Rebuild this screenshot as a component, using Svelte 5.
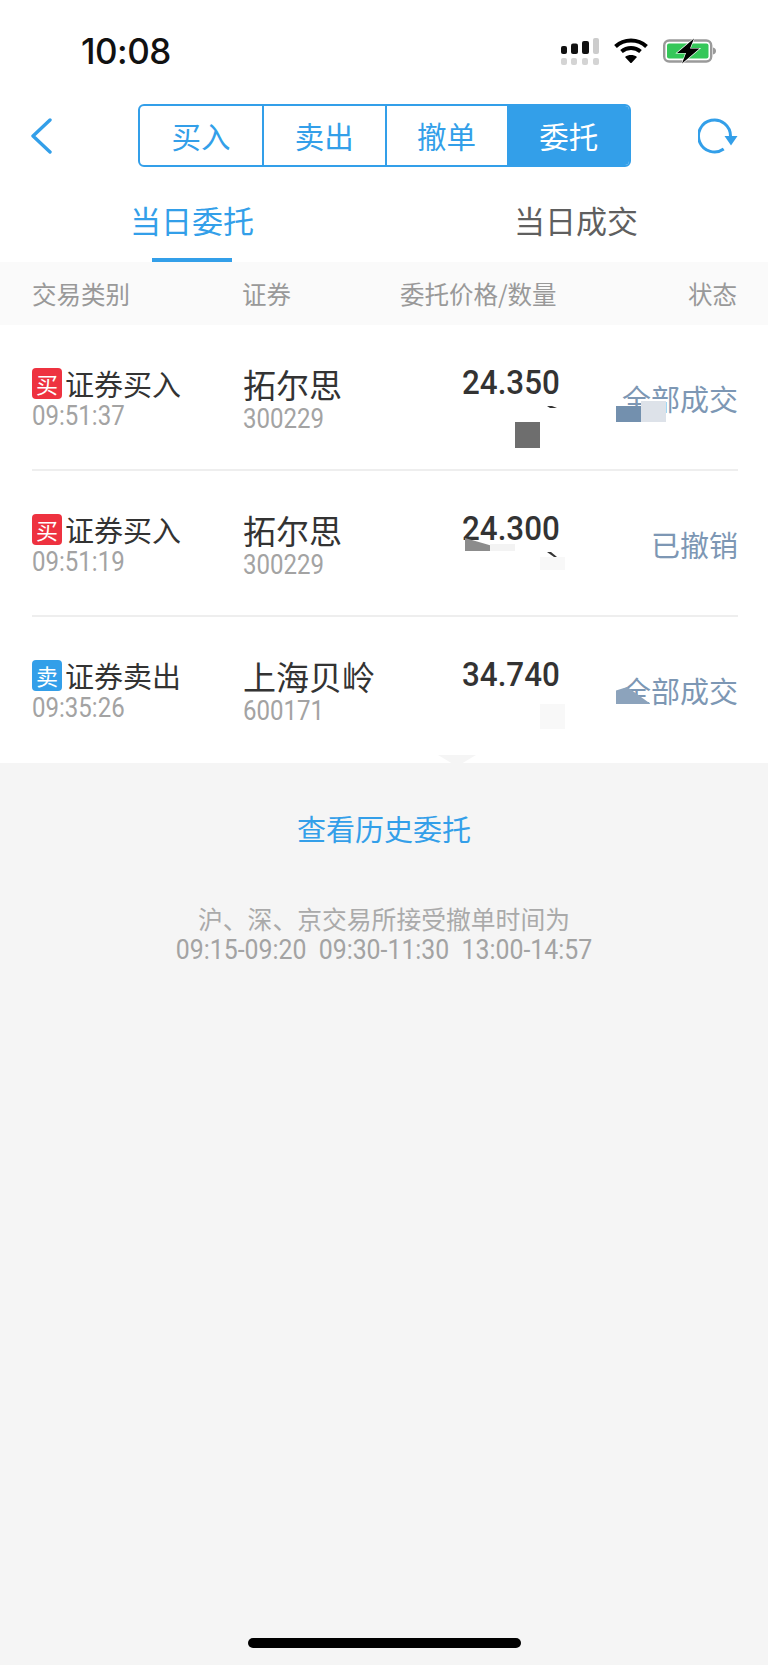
<script>
  const segments = ['买入', '卖出', '撤单', '委托'];
  const rows = [
    { badge: '买', kind: 'buy', type: '证券买入', time: '09:51:37', name: '拓尔思', code: '300229', price: '24.350', status: '全部成交', marks: ['m-a1', 'm-a2', 'm-a3', 'm-a4'] },
    { badge: '买', kind: 'buy', type: '证券买入', time: '09:51:19', name: '拓尔思', code: '300229', price: '24.300', status: '已撤销', marks: ['m-b1', 'm-b2', 'm-b3', 'm-b4'] },
    { badge: '卖', kind: 'sell', type: '证券卖出', time: '09:35:26', name: '上海贝岭', code: '600171', price: '34.740', status: '全部成交', marks: ['m-c1', 'm-c2'] }
  ];
</script>

<main class="page">
  <header class="top">
    <div class="status">
      <span class="clock">10:08</span>
      <div class="indicators">
        <svg class="signal" width="38" height="30" viewBox="0 0 38 30">
          <g fill="#111">
            <rect x="0" y="8" width="6" height="8" rx="2" />
            <rect x="10" y="5.500" width="7" height="10.500" rx="2" />
            <rect x="21" y="3" width="7" height="13" rx="2" />
          </g>
          <rect x="32" y="0" width="6" height="16" rx="2" fill="#ccc" />
          <g fill="#d4d4d4">
            <rect x="0" y="20" width="6" height="7" rx="2" />
            <rect x="10" y="20" width="6" height="7" rx="2" />
            <rect x="21" y="20" width="6" height="7" rx="2" />
            <rect x="32" y="20" width="6" height="7" rx="2" />
          </g>
        </svg>
        <svg class="wifi" width="34" height="25" viewBox="0 0 34 25">
          <path d="M1.500 8.500C10 .5 24 .5 32.500 8.500" fill="none" stroke="#000" stroke-width="4" />
          <path d="M7.500 13.500c5.500-4.600 13.500-4.600 19 0" fill="none" stroke="#000" stroke-width="4" />
          <path d="M11 19L17 25.500l6-6.500c-3.600-2.600-8.400-2.600-12 0z" fill="#000" />
        </svg>
        <svg class="battery" width="54" height="26" viewBox="0 0 54 26">
          <rect x="1.200" y="2.500" width="47" height="21" rx="5" fill="#fff" stroke="#9a9a9a" stroke-width="2.400" />
          <rect x="4" y="5.500" width="41.500" height="15" rx="2" fill="#35c759" />
          <path d="M50 9.500c2 .5 3 1.800 3 3.500s-1 3-3 3.500z" fill="#9a9a9a" />
          <path d="M31 .5L14 15h9l-4 10.500L36.500 10.500H27z" fill="#000" stroke="#fff" stroke-width="1.200" paint-order="stroke" />
        </svg>
      </div>
    </div>

    <nav class="nav">
      <svg class="back" width="22" height="36" viewBox="0 0 22 36">
        <path d="M20 2L3 18l17 16" fill="none" stroke="#339fe9" stroke-width="3.400" stroke-linecap="round" stroke-linejoin="round" />
      </svg>
      <div class="segments">
        {#each segments as s, i}
          <span class="seg" class:active={i === 3}>{s}</span>
        {/each}
      </div>
      <svg class="refresh" width="40" height="36" viewBox="0 0 40 36">
        <path d="M25.700 31.100A16 16 0 1 1 32.500 18" fill="none" stroke="#339fe9" stroke-width="3" />
        <path d="M26.500 18h13l-6.500 9.500z" fill="#339fe9" />
      </svg>
    </nav>

    <div class="tabs">
      <div class="tab on"><span>当日委托</span><i class="bar"></i></div>
      <div class="tab"><span>当日成交</span></div>
    </div>
  </header>

  <div class="thead">
    <span>交易类别</span>
    <span>证券</span>
    <span>委托价格/数量</span>
    <span class="end">状态</span>
  </div>

  <section class="list">
    {#each rows as r, i}
      <article class="row" class:last={i === rows.length - 1}>
        <div class="c-type">
          <div class="type"><b class="badge {r.kind}">{r.badge}</b>{r.type}</div>
          <div class="num">{r.time}</div>
        </div>
        <div class="c-name">
          <div class="name">{r.name}</div>
          <div class="num">{r.code}</div>
        </div>
        <div class="price">{r.price}</div>
        <div class="state">{r.status}</div>
        {#each r.marks as m}
          <i class="mark {m}"></i>
        {/each}
      </article>
    {/each}
    <i class="notch"></i>
  </section>

  <a class="history" href="#history">查看历史委托</a>
  <p class="note">沪、深、京交易所接受撤单时间为</p>
  <p class="note digits">09:15-09:20&nbsp;&nbsp;09:30-11:30&nbsp;&nbsp;13:00-14:57</p>

  <div class="home"></div>
</main>

<style>
  :global(body) {
    margin: 0;
    background: #f5f5f5;
  }
  .page {
    width: 768px;
    height: 1665px;
    display: flex;
    flex-direction: column;
    background: #f5f5f5;
    font-family: "Noto Sans CJK SC", "Noto Sans", sans-serif;
    overflow: hidden;
  }
  .top {
    background: #fff;
  }
  .status {
    height: 104px;
    box-sizing: border-box;
    display: flex;
    justify-content: space-between;
    padding: 31px 51px 0 81px;
  }
  .clock {
    font: 500 35px/40px Inter, sans-serif;
    color: #111;
    letter-spacing: -0.5px;
  }
  .indicators {
    display: flex;
    gap: 15px;
    height: 40px;
    padding-top: 7px;
    box-sizing: border-box;
    align-items: flex-start;
  }
  .nav {
    height: 63px;
    display: flex;
    align-items: center;
    padding: 0 30px;
  }
  .segments {
    width: 493px;
    height: 63px;
    margin-left: 86px;
    margin-right: auto;
    box-sizing: border-box;
    border: 2px solid #339fe9;
    border-radius: 6px;
    display: grid;
    grid-template-columns: repeat(4, 1fr);
    overflow: hidden;
  }
  .seg {
    font-size: 29.500px;
    line-height: 58px;
    text-align: center;
    color: #339fe9;
    border-left: 2px solid #339fe9;
  }
  .seg:first-child {
    border-left: 0;
  }
  .seg.active {
    background: #339fe9;
    color: #fff;
  }
  .tabs {
    display: grid;
    grid-template-columns: 1fr 1fr;
    height: 95px;
  }
  .tab {
    display: flex;
    flex-direction: column;
    align-items: center;
    padding-top: 33px;
    font-size: 31px;
    line-height: 40px;
    color: #5f5f5f;
  }
  .tab.on {
    color: #339fe9;
  }
  .bar {
    width: 80px;
    height: 4px;
    margin-top: 18px;
    background: #339fe9;
  }
  .thead {
    height: 63px;
    display: grid;
    grid-template-columns: 210px 158px 1fr auto;
    align-items: center;
    padding: 0 31px 0 32px;
    background: #fafafa;
    font-size: 24.500px;
    color: #999;
  }
  .list {
    position: relative;
    background: #fff;
  }
  .row {
    position: relative;
    height: 146px;
    box-sizing: border-box;
    display: grid;
    grid-template-columns: 212px 218px 1fr auto;
    align-items: start;
    padding: 0 30px 0 32px;
  }
  .row::after {
    content: "";
    position: absolute;
    left: 32px;
    right: 30px;
    bottom: 0;
    height: 2px;
    background: #eee;
  }
  .row.last::after {
    display: none;
  }
  .c-type {
    padding-top: 39px;
  }
  .type {
    display: flex;
    align-items: center;
    gap: 3px;
    height: 38px;
    font-size: 29px;
    line-height: 38px;
    color: #333;
    white-space: nowrap;
  }
  .badge {
    width: 30px;
    height: 31px;
    border-radius: 4px;
    font-size: 22px;
    font-weight: 400;
    line-height: 30px;
    text-align: center;
    color: #fff;
  }
  .badge.buy {
    background: #ee3240;
  }
  .badge.sell {
    background: #339fe9;
  }
  .num {
    font: 400 27px/28px Roboto, sans-serif;
    color: #a3a3a3;
    transform: scaleX(0.89);
    transform-origin: left center;
  }
  .c-name {
    padding-top: 39px;
    margin-left: -1px;
  }
  .name {
    font-size: 33px;
    line-height: 41px;
    color: #333;
    white-space: nowrap;
  }
  .price {
    padding-top: 40px;
    font: 500 33px/36px Roboto, sans-serif;
    color: #333;
    transform: scaleX(0.95);
    transform-origin: left center;
  }
  .state {
    padding-top: 55px;
    font-size: 29px;
    line-height: 36px;
    color: #7d97b4;
    white-space: nowrap;
  }
  .mark {
    position: absolute;
  }
  .m-a1 { left: 616px; top: 81px; width: 25px; height: 16px; background: #7390ae; }
  .m-a2 { left: 641px; top: 76px; width: 25px; height: 21px; background: #dde2e9; }
  .m-a3 { left: 515px; top: 97px; width: 25px; height: 26px; background: #6e6e6e; }
  .m-a4 { left: 547px; top: 81px; width: 10px; height: 2px; background: #333; clip-path: polygon(0 0, 50% 0, 100% 100%, 30% 100%); }
  .m-b1 { left: 465px; top: 67px; width: 25px; height: 13px; background: #8c8c8c; clip-path: polygon(0 0, 100% 55%, 100% 100%, 0 100%); }
  .m-b2 { left: 490px; top: 73px; width: 25px; height: 7px; background: #f3f3f3; }
  .m-b3 { left: 547px; top: 81px; width: 10px; height: 5px; background: #333; clip-path: polygon(0 0, 40% 0, 100% 100%, 70% 100%); }
  .m-b4 { left: 540px; top: 86px; width: 25px; height: 13px; background: #f8f8f8; }
  .m-c1 { left: 616px; top: 70px; width: 34px; height: 17px; background: #8ca3bc; clip-path: polygon(0 20%, 33% 0, 100% 97%, 100% 100%, 0 100%); }
  .m-c2 { left: 540px; top: 87px; width: 25px; height: 25px; background: #f8f8f8; }
  .notch {
    position: absolute;
    left: 438px;
    bottom: 0;
    width: 38px;
    height: 8px;
    background: #f5f5f5;
    clip-path: polygon(0 0, 100% 0, 65% 100%, 35% 100%);
  }
  .history {
    margin-top: 45px;
    font-size: 29px;
    line-height: 40px;
    text-align: center;
    color: #339fe9;
    text-decoration: none;
  }
  .note {
    margin: 0;
    font-size: 24.800px;
    line-height: 32px;
    text-align: center;
    color: #aaa;
  }
  .history + .note {
    margin-top: 54px;
  }
  .digits {
    font-family: Roboto, sans-serif;
    font-size: 27px;
    color: #a3a3a3;
    transform: scaleX(0.92);
  }
  .home {
    width: 273px;
    height: 10px;
    margin: auto auto 17px;
    border-radius: 5px;
    background: #000;
  }
</style>
